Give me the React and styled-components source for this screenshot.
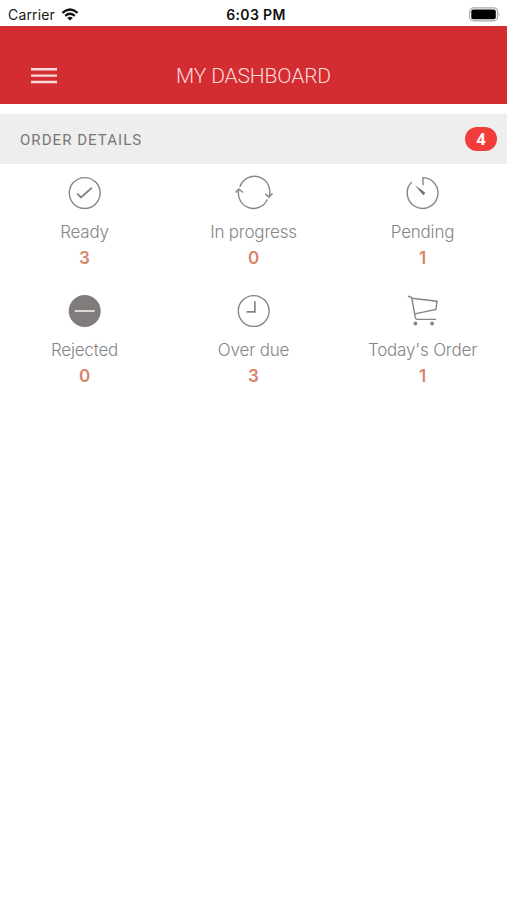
import styled, { createGlobalStyle } from 'styled-components';

const GlobalStyle = createGlobalStyle`
  * {
    box-sizing: border-box;
  }

  body {
    margin: 0;

    background-color: #fff;

    font-family: Inter, 'Liberation Sans', sans-serif;
  }
`;

const Screen = styled.main`
  display: flex;
  flex-direction: column;

  height: 900px;
  overflow: hidden;

  background-color: #fff;
`;

const StatusBar = styled.div`
  display: grid;
  grid-template-columns: 1fr auto 1fr;
  align-items: center;

  height: 25.5px;
  padding: 1px 6px 0 8px;

  color: #1a1a1a;

  font-size: 14px;
  line-height: 26px;
`;
const Carrier = styled.div`
  display: flex;
  align-items: center;
  gap: 6px;

  letter-spacing: 0.15px;
`;
const Time = styled.div`
  padding-top: 1px;
  padding-left: 3px;

  color: #111;

  font-size: 14px;
  font-weight: 600;
  letter-spacing: 0.35px;
`;
const Battery = styled.svg`
  justify-self: end;
`;

const Header = styled.header`
  display: grid;
  grid-template-columns: 1fr auto 1fr;
  align-items: center;

  height: 78px;
  padding: 22px 31px 0;

  background-color: #d32d31;
`;
const MenuButton = styled.button`
  width: 26px;
  height: 17px;
  padding: 0;
  border: 0;

  background: none;

  & > svg {
    display: block;
  }
`;
const Title = styled.h1`
  margin: 0;

  color: #fbdcdc;

  font-family: Roboto, sans-serif;
  font-size: 21px;
  font-weight: 300;
  line-height: 26px;
  letter-spacing: -0.15px;
`;

const SectionBar = styled.div`
  display: flex;
  align-items: center;
  justify-content: space-between;

  height: 50px;
  margin-top: 10.5px;
  padding: 0 10px 0 20px;

  background-color: #eee;
`;
const SectionTitle = styled.h2`
  margin: 2px 0 0;

  color: #777;

  font-family: Roboto, sans-serif;
  font-size: 15px;
  font-weight: 400;
  letter-spacing: 1.05px;
`;
const Badge = styled.span`
  width: 32px;
  height: 24px;
  border-radius: 12px;

  background-color: #f23c3c;

  color: #fff;

  text-align: center;

  font-family: 'Open Sans', sans-serif;
  font-size: 16px;
  font-weight: 700;
  line-height: 24px;
`;

const Grid = styled.section`
  display: grid;
  grid-template-columns: repeat(3, 1fr);
  grid-auto-rows: 117.5px;

  padding-top: 9px;
`;
const Card = styled.div`
  display: flex;
  flex-direction: column;
  align-items: center;
`;
const Icon = styled.svg`
  width: 40px;
  height: 40px;

  fill: none;
  stroke: #858585;
  stroke-width: 1.4;
`;
const Label = styled.span`
  margin-top: 6px;

  color: #858585;

  font-size: 17px;
  font-weight: 300;
  line-height: 26px;
  letter-spacing: -0.2px;
`;
const Count = styled.span`
  color: #d98369;

  font-size: 17px;
  font-weight: 600;
  line-height: 26px;
`;

const icons = {
  ready: (
    <>
      <circle cx="20" cy="20" r="15.4" />
      <path d="M12.6 20.6L16.2 24.4L27.2 14.7" strokeWidth="1.8" />
    </>
  ),
  progress: (
    <>
      <path d="M6.2 13.8A15.2 15.2 0 0 1 35.3 23.5" />
      <path d="M33.7 26.5A15.2 15.2 0 0 1 5.1 16.6" />
      <path d="M1.8 19.6L5.2 16L9.2 19.6" />
      <path d="M31.6 20.7L35.3 24.3L38.8 20.3" />
    </>
  ),
  pending: (
    <>
      <path d="M20.3 12.3V4.6A15.4 15.4 0 1 1 9 9.1" />
      <path
        d="M12.3 12.2L22.3 19.6Q22.6 21.8 20.3 22.1Z"
        fill="#707070"
        stroke="none"
      />
    </>
  ),
  rejected: (
    <>
      <circle cx="20" cy="20" r="16" fill="#807c7c" stroke="none" />
      <path d="M10 20H30" stroke="#efe6e6" strokeWidth="1.7" />
    </>
  ),
  overdue: (
    <>
      <circle cx="20" cy="20" r="15.4" />
      <path d="M21.2 10.3V20.8H12.8" strokeWidth="1.7" />
    </>
  ),
  cart: (
    <>
      <path d="M5.2 5.1L8.9 6.6L12.7 26.7Q13 28.4 14.6 28.4H33.3" />
      <path d="M9 7.3L34.3 10.2L33.2 18.4L12.2 22.9" />
      <circle cx="12.7" cy="32.5" r="1.9" fill="#858585" stroke="none" />
      <circle cx="29.4" cy="32.5" r="1.9" fill="#858585" stroke="none" />
    </>
  ),
};

const orders = [
  { label: 'Ready', count: 3, icon: 'ready' },
  { label: 'In progress', count: 0, icon: 'progress' },
  { label: 'Pending', count: 1, icon: 'pending' },
  { label: 'Rejected', count: 0, icon: 'rejected' },
  { label: 'Over due', count: 3, icon: 'overdue' },
  { label: "Today's Order", count: 1, icon: 'cart' },
];

function App() {
  return (
    <Screen>
      <GlobalStyle />

      <StatusBar>
        <Carrier>
          Carrier
          <svg width="18" height="13" viewBox="0 0 18 13" fill="none">
            <g stroke="#111" strokeWidth="2.2">
              <path d="M1.4 4.8Q9 -1.8 16.6 4.8" />
              <path d="M4.2 7.8Q9 3.7 13.8 7.8" />
            </g>
            <path d="M6.2 9.9Q9 7.8 11.8 9.9L9 12.6Z" fill="#111" />
          </svg>
        </Carrier>
        <Time>6:03 PM</Time>
        <Battery width="33" height="15" viewBox="0 0 33 15">
          <rect
            x="1.7"
            y="0.8"
            width="27.8"
            height="13"
            rx="3.8"
            fill="#fff"
            stroke="#aaa"
            strokeWidth="1.2"
          />
          <rect x="3.3" y="2.5" width="24.5" height="9.8" rx="2" fill="#000" />
          <path d="M30.8 5.2Q32.5 7.3 30.8 9.4Z" fill="#888" />
        </Battery>
      </StatusBar>

      <Header>
        <MenuButton aria-label="Menu">
          <svg width="26" height="17" viewBox="0 0 26 17">
            <path
              d="M0 2.2H26M0 8.6H26M0 15H26"
              stroke="#fbdcdc"
              strokeWidth="2.4"
            />
          </svg>
        </MenuButton>
        <Title>MY DASHBOARD</Title>
      </Header>

      <SectionBar>
        <SectionTitle>ORDER DETAILS</SectionTitle>
        <Badge>4</Badge>
      </SectionBar>

      <Grid>
        {orders.map(({ label, count, icon }) => (
          <Card key={label}>
            <Icon viewBox="0.3 0 40 40">{icons[icon]}</Icon>
            <Label>{label}</Label>
            <Count>{count}</Count>
          </Card>
        ))}
      </Grid>
    </Screen>
  );
}

export default App;
